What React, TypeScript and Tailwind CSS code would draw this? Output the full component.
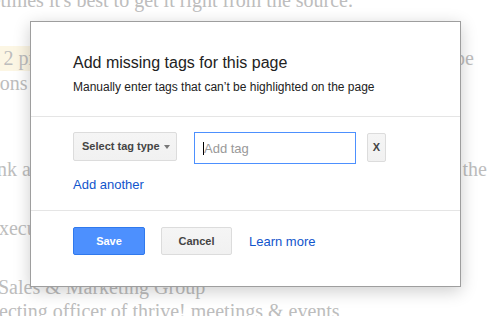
export default function App() {
  return (
    <div className="relative w-[492px] h-[316px] overflow-hidden bg-white font-['Liberation_Serif',Georgia,serif] text-[20px] leading-[25px] text-[#bdbdbd]">
      <div className="whitespace-nowrap">
        <div className="mt-[-12px] ml-[-45px]">Sometimes it's best to get it right from the source.</div>
        <div className="mt-[33px] flex">
          <span className="ml-[-16px] bg-[#fcf6e4]">at 2 pm for the weekly sync, and</span>
          <span className="ml-auto pr-[18px]">type</span>
        </div>
        <div className="ml-[-38px]">sessions and workshops</div>
        <div className="mt-[61px] flex">
          <span className="ml-[-24px]">think about the day in the</span>
          <span className="ml-auto pr-[5px]">the</span>
        </div>
        <div className="mt-[34px] ml-[-10px]">executive summary</div>
        <div className="mt-[34px] ml-[-2px]">Sales &amp; Marketing Group</div>
        <div className="mt-[-1px] ml-[-1px]">ecting officer of thrive! meetings &amp; events</div>
      </div>

      <div className="absolute left-[30px] top-[21px] w-[431px] h-[266px] bg-white border border-[#9e9e9e] shadow-[0_4px_16px_rgba(0,0,0,0.2)] font-['Liberation_Sans',Arial,sans-serif] text-[#222]">
        <div className="pt-[31px] pb-[21px] pl-[42px]">
          <div className="text-[16px] leading-[20px]">Add missing tags for this page</div>
          <div className="mt-[6px] text-[12px] leading-[16px]">Manually enter tags that can’t be highlighted on the page</div>
        </div>
        <div className="border-t border-[#e5e5e5] pt-[15px] pb-[17px] pl-[42px]">
          <div className="flex items-start">
            <div className="w-[104px] h-[29px] flex items-center pl-[8px] border border-[#dcdcdc] rounded-[2px] bg-gradient-to-b from-[#f5f5f5] to-[#f1f1f1] text-[11px] font-bold text-[#444]">
              <span>Select tag type</span>
              <span className="ml-[4px] mt-[1px] w-0 h-0 border-x-[3.5px] border-t-[4px] border-x-transparent border-t-[#777]"></span>
            </div>
            <div className="ml-[17px] w-[162px] h-[32px] flex items-center pl-[8px] border border-[#4d90fe] text-[13px] text-[#999]">
              <span className="w-px h-[13px] bg-black"></span>
              <span>Add tag</span>
            </div>
            <div className="ml-[11px] mt-[1px] w-[19px] h-[29px] flex items-center justify-center border border-[#dcdcdc] rounded-[2px] bg-gradient-to-b from-[#f5f5f5] to-[#f1f1f1] text-[11px] font-bold text-[#444]">
              X
            </div>
          </div>
          <div className="mt-[13px] text-[13px] leading-[16px] text-[#1155cc]">Add another</div>
        </div>
        <div className="border-t border-[#e5e5e5] pt-[16px] pl-[42px] flex items-center">
          <div className="w-[72px] h-[28px] flex items-center justify-center rounded-[2px] border border-[#3079ed] bg-[#4d90fe] text-white text-[11px] font-bold">
            Save
          </div>
          <div className="ml-[16px] w-[71px] h-[28px] flex items-center justify-center rounded-[2px] border border-[#dcdcdc] bg-gradient-to-b from-[#f5f5f5] to-[#f1f1f1] text-[#444] text-[11px] font-bold">
            Cancel
          </div>
          <div className="ml-[17px] text-[13px] text-[#1155cc]">Learn more</div>
        </div>
      </div>
    </div>
  );
}
